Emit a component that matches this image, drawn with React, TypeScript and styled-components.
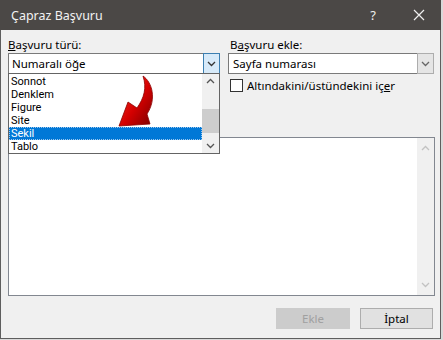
import React from "react";
import styled, { createGlobalStyle } from "styled-components";

const Global = createGlobalStyle`
  html, body { margin: 0; padding: 0; background: #d9d9d9; }
  body { font-family: "Noto Sans", "Open Sans", sans-serif; }
  * { box-sizing: border-box; }
`;

const Window = styled.div`
  position: relative;
  width: 441px;
  height: 339px;
  background: #f0f0f0;
  border: 1px solid #5e5e5e;
  border-top: none;
  display: flex;
  flex-direction: column;
  font-size: 11.5px;
  color: #000;
`;

const TitleBar = styled.div`
  height: 30px;
  margin: 0 -1px;
  background: #4b4846;
  color: #f2f2f2;
  display: flex;
  align-items: center;
  padding-left: 11px;
  font-size: 12.5px;
`;

const Title = styled.div`
  flex: 1;
`;

const TitleButton = styled.div<{ $w: number }>`
  width: ${(p) => p.$w}px;
  height: 30px;
  display: flex;
  align-items: center;
  justify-content: center;
  color: #f0f0f0;
  font-size: 13px;
`;

const Body = styled.div`
  flex: 1;
  display: flex;
  flex-direction: column;
  padding: 7px 7px 0 7px;
`;

const TopGrid = styled.div`
  display: grid;
  grid-template-columns: 212px 206px;
  column-gap: 8px;
  align-items: start;
`;

const Column = styled.div`
  position: relative;
  display: flex;
  flex-direction: column;
`;

const Label = styled.div<{ $pad?: number }>`
  height: 16px;
  line-height: 16px;
  padding-left: ${(p) => p.$pad ?? 0}px;
  white-space: nowrap;
`;

const Combo = styled.div`
  height: 21px;
  border: 1px solid #7a7a7a;
  background: #fff;
  display: flex;
  align-items: stretch;
`;

const ComboText = styled.div<{ $pad: number }>`
  flex: 1;
  padding-left: ${(p) => p.$pad}px;
  line-height: 19px;
  white-space: nowrap;
`;

const ComboButton = styled.div<{ $active?: boolean }>`
  width: 17px;
  margin: -1px -1px -1px 0;
  border: 1px solid ${(p) => (p.$active ? "#3c7fb1" : "#adadad")};
  background: ${(p) => (p.$active ? "#d7eaf9" : "#e5e5e5")};
  display: flex;
  align-items: center;
  justify-content: center;
`;

const DropList = styled.div`
  position: absolute;
  top: 36px;
  left: 0;
  width: 212px;
  height: 81px;
  background: #fff;
  border: 1px solid #646464;
  display: flex;
  z-index: 5;
`;

const Items = styled.div`
  flex: 1;
  display: flex;
  flex-direction: column;
  padding-top: 1px;
`;

const Item = styled.div<{ $sel?: boolean }>`
  height: 13px;
  line-height: 13px;
  font-family: Roboto, "Noto Sans", sans-serif;
  font-size: 11px;
  padding-left: 2px;
  background: ${(p) => (p.$sel ? "#0078d7" : "transparent")};
  color: ${(p) => (p.$sel ? "#fff" : "#000")};
  outline: ${(p) => (p.$sel ? "1px dotted #9cc7ee" : "none")};
  outline-offset: -1px;
`;

const ListScroll = styled.div`
  width: 17px;
  background: #f0f0f0;
  display: flex;
  flex-direction: column;
  align-items: center;
`;

const ScrollArrow = styled.div`
  height: 14px;
  width: 100%;
  display: flex;
  align-items: center;
  justify-content: center;
`;

const Track = styled.div`
  flex: 1;
  width: 100%;
  display: flex;
  flex-direction: column;
  padding-top: 21px;
`;

const Thumb = styled.div`
  height: 24px;
  width: 100%;
  background: #cdcdcd;
`;

const CheckRow = styled.label`
  display: flex;
  align-items: center;
  gap: 4px;
  margin-top: 4px;
  padding-left: 2px;
  height: 15px;
  white-space: nowrap;
`;

const CheckBox = styled.span`
  width: 13px;
  height: 13px;
  border: 1px solid #333;
  background: #fff;
`;

const BigBox = styled.div`
  margin-top: 44px;
  height: 159px;
  width: 427px;
  border: 1px solid #828790;
  background: #fff;
  display: flex;
  justify-content: flex-end;
`;

const BigScroll = styled.div`
  width: 17px;
  background: #f0f0f0;
  display: flex;
  flex-direction: column;
  justify-content: space-between;
  padding: 3px 0 3px;
`;

const Footer = styled.div`
  display: flex;
  justify-content: flex-end;
  gap: 10px;
  margin-top: 12px;
`;

const Button = styled.div<{ $disabled?: boolean }>`
  width: ${(p) => (p.$disabled ? 74 : 73)}px;
  height: 21px;
  display: flex;
  align-items: center;
  justify-content: center;
  background: ${(p) => (p.$disabled ? "#cccccc" : "#e1e1e1")};
  border: 1px solid ${(p) => (p.$disabled ? "#cccccc" : "#adadad")};
  color: ${(p) => (p.$disabled ? "#a0a0a0" : "#000")};
`;

const ArrowSvg = styled.svg`
  position: absolute;
  left: 109px;
  top: 72px;
  z-index: 10;
  pointer-events: none;
`;

const Chevron = ({ color = "#333", down = true }: { color?: string; down?: boolean }) => (
  <svg width={9} height={6} viewBox="0 0 9 6">
    {down ? (
      <polyline points="1,1 4.5,4.5 8,1" fill="none" stroke={color} strokeWidth={1.3} />
    ) : (
      <polyline points="1,5 4.5,1.5 8,5" fill="none" stroke={color} strokeWidth={1.3} />
    )}
  </svg>
);

export default function App() {
  return (
    <>
      <Global />
      <Window>
        <TitleBar>
          <Title>Çapraz Başvuru</Title>
          <TitleButton $w={48}>?</TitleButton>
          <TitleButton $w={44}>
            <svg width="12" height="12" viewBox="0 0 12 12">
              <path d="M1 1 L11 11 M11 1 L1 11" stroke="#f0f0f0" strokeWidth="1.2" />
            </svg>
          </TitleButton>
        </TitleBar>
        <Body>
          <TopGrid>
            <Column>
              <Label>
                <u>B</u>aşvuru türü:
              </Label>
              <Combo>
                <ComboText $pad={3}>Numaralı öğe</ComboText>
                <ComboButton $active>
                  <Chevron color="#333" />
                </ComboButton>
              </Combo>
              <DropList>
                <Items>
                  <Item>Sonnot</Item>
                  <Item>Denklem</Item>
                  <Item>Figure</Item>
                  <Item>Site</Item>
                  <Item $sel>Sekil</Item>
                  <Item>Tablo</Item>
                </Items>
                <ListScroll>
                  <ScrollArrow>
                    <Chevron color="#555" down={false} />
                  </ScrollArrow>
                  <Track>
                    <Thumb />
                  </Track>
                  <ScrollArrow>
                    <Chevron color="#555" />
                  </ScrollArrow>
                </ListScroll>
              </DropList>
            </Column>
            <Column>
              <Label $pad={2}>
                B<u>a</u>şvuru ekle:
              </Label>
              <Combo>
                <ComboText $pad={4}>Sayfa numarası</ComboText>
                <ComboButton>
                  <Chevron color="#666" />
                </ComboButton>
              </Combo>
              <CheckRow>
                <CheckBox />
                <span>
                  Altındakini/üstündekini iç<u>e</u>r
                </span>
              </CheckRow>
            </Column>
          </TopGrid>
          <BigBox>
            <BigScroll>
              <ScrollArrow>
                <Chevron color="#c2c2c2" down={false} />
              </ScrollArrow>
              <ScrollArrow>
                <Chevron color="#c2c2c2" />
              </ScrollArrow>
            </BigScroll>
          </BigBox>
          <Footer>
            <Button $disabled>Ekle</Button>
            <Button>İptal</Button>
          </Footer>
        </Body>
        <ArrowSvg width="50" height="60" viewBox="0 0 50 60">
          <defs>
            <linearGradient id="ag" x1="0" y1="0" x2="1" y2="1">
              <stop offset="0" stopColor="#ff3a2a" />
              <stop offset="0.55" stopColor="#d40000" />
              <stop offset="1" stopColor="#7a0000" />
            </linearGradient>
          </defs>
          <path
            d="M33,4 C42,10 47,27 37,42 L40,52 L9,54 L18,30 L27,36 C34,26 37,16 33,4 Z"
            fill="url(#ag)"
            stroke="#8a0000"
            strokeWidth="0.8"
          />
        </ArrowSvg>
      </Window>
    </>
  );
}
